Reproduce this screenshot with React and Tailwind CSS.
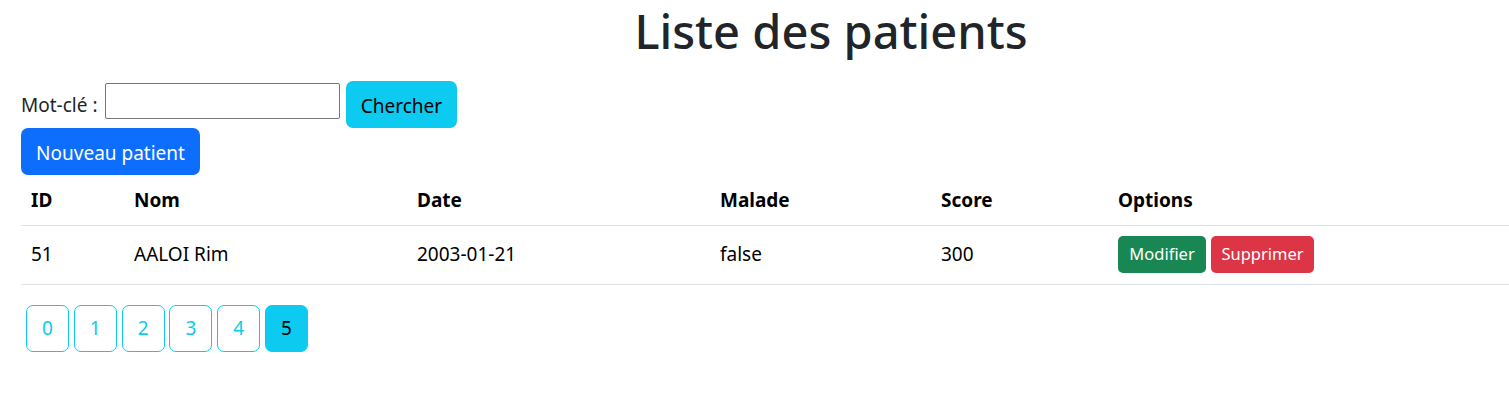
import React from 'react';

const patients = [
  { id: 51, nom: 'AALOI Rim', date: '2003-01-21', malade: 'false', score: 300 },
];

const pages = [0, 1, 2, 3, 4, 5];
const currentPage = 5;

const App = () => {
  return (
    <div className="w-full min-h-[413px] overflow-hidden bg-white text-[#212529]" style={{ fontFamily: '"Noto Sans", "Open Sans", sans-serif' }}>
      <div className="w-[1620px] ml-[21px]">
        {/* Title */}
        <h1 className="text-center text-[47px] font-medium leading-[62px] mb-[19px]">Liste des patients</h1>

        {/* Search form */}
        <form className="flex items-start h-[47px]" onSubmit={(e) => e.preventDefault()}>
          <label className="w-[79px] text-[19px] leading-[47px] mt-[1px] whitespace-nowrap">Mot-clé :</label>
          <input type="text" className="ml-[5px] mt-[2px] w-[235px] h-[36px] border border-[#767676] rounded-[2px] px-1 text-[18px]" />
          <button className="ml-[6px] w-[111px] h-[47px] rounded-[7px] bg-[#0dcaf0] text-black text-[19px] leading-[50px]">Chercher</button>
        </form>

        <button className="block w-[179px] h-[47px] rounded-[7px] bg-[#0d6efd] text-white text-[19px] leading-[50px]">Nouveau patient</button>

        {/* Table */}
        <table className="w-full table-fixed border-collapse mb-[20px] text-black text-[19px]">
          <thead>
            <tr className="border-b border-[#dee2e6] h-[50px]">
              <th className="w-[103px] px-[10px] text-left font-bold">ID</th>
              <th className="w-[283px] px-[10px] text-left font-bold">Nom</th>
              <th className="w-[303px] px-[10px] text-left font-bold">Date</th>
              <th className="w-[221px] px-[10px] text-left font-bold">Malade</th>
              <th className="w-[177px] px-[10px] text-left font-bold">Score</th>
              <th className="px-[10px] text-left font-bold">Options</th>
            </tr>
          </thead>
          <tbody>
            {patients.map((p) => (
              <tr key={p.id} className="border-b border-[#dee2e6] h-[59px]">
                <td className="px-[10px]">{p.id}</td>
                <td className="px-[10px]">{p.nom}</td>
                <td className="px-[10px]">{p.date}</td>
                <td className="px-[10px]">{p.malade}</td>
                <td className="px-[10px]">{p.score}</td>
                <td className="px-[10px]">
                  <div className="flex gap-[5px]">
                    <button className="w-[88px] h-[37px] rounded-[5px] bg-[#198754] text-white text-[16.5px]">Modifier</button>
                    <button className="w-[103px] h-[37px] rounded-[5px] bg-[#dc3545] text-white text-[16.5px]">Supprimer</button>
                  </div>
                </td>
              </tr>
            ))}
          </tbody>
        </table>

        {/* Pagination */}
        <ul className="flex gap-[4.8px] pl-[5px]">
          {pages.map((page) => (
            <li key={page}>
              <button
                className={`w-[43px] h-[47px] rounded-[7px] border border-[#0dcaf0] text-[19px] ${
                  page === currentPage ? 'bg-[#0dcaf0] text-black' : 'bg-white text-[#0dcaf0]'
                }`}
              >
                {page}
              </button>
            </li>
          ))}
        </ul>
      </div>
    </div>
  );
};

export default App;
